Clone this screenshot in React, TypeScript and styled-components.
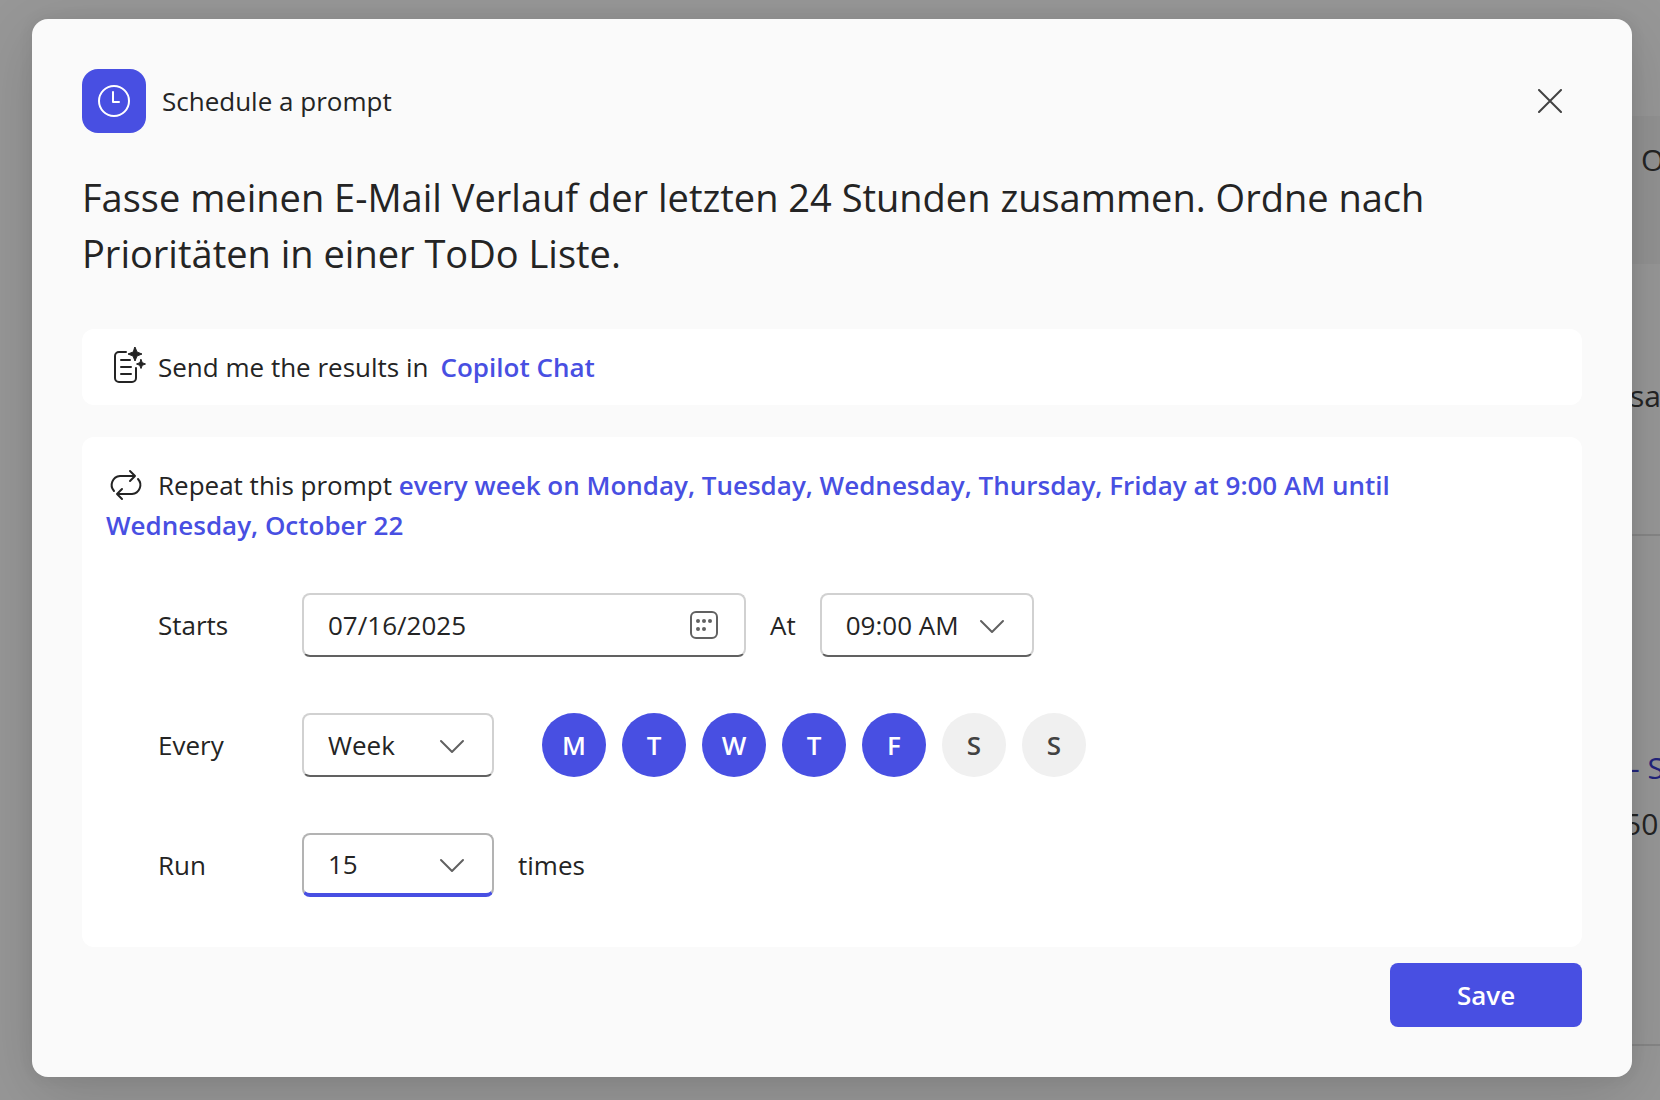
import React, { useState } from "react";
import styled, { createGlobalStyle } from "styled-components";

const font = '"Open Sans", "Noto Sans", sans-serif';
const brand = "#484fe2";
const ink = "#242424";

const GlobalStyle = createGlobalStyle`
  *, *::before, *::after { box-sizing: border-box; }
  body {
    margin: 0;
    background: #979797;
    color: ${ink};
    font-family: ${font};
    font-size: 26px;
    line-height: 40px;
  }
  button, input, select { font: inherit; color: inherit; }
`;

const Stage = styled.div`
  position: relative;
  min-height: 100vh;
  overflow: hidden;
`;

const Underlay = styled.aside`
  position: absolute;
  inset: 0 0 0 auto;
  width: 60px;
  overflow: hidden;
  display: flex;
  flex-direction: column;
  white-space: nowrap;
`;

const UnderlayBlock = styled.div<{ $height: number; $top?: number; $shade?: boolean; $line?: boolean }>`
  flex: none;
  height: ${(p) => p.$height}px;
  padding-top: ${(p) => p.$top || 0}px;
  background: ${(p) => (p.$shade ? "#929292" : "transparent")};
  border-bottom: ${(p) => (p.$line ? "2px solid #868686" : "0")};
  display: flex;
  flex-direction: column;
`;

const UnderlayText = styled.span<{ $indent: number; $link?: boolean }>`
  padding-left: ${(p) => p.$indent}px;
  line-height: 56px;
  font-size: 30px;
  color: ${(p) => (p.$link ? "#22247c" : ink)};
`;

const Layer = styled.div`
  position: relative;
  padding: 19px 28px 23px 32px;
`;

const Dialog = styled.section`
  display: flex;
  flex-direction: column;
  padding: 50px;
  border-radius: 16px;
  background: #fafafa;
  box-shadow: 0 0 16px rgba(0, 0, 0, 0.07), 0 16px 64px rgba(0, 0, 0, 0.14);
`;

const Header = styled.header`
  display: flex;
  align-items: center;
  gap: 16px;
`;

const Tile = styled.span`
  display: grid;
  place-items: center;
  width: 64px;
  height: 64px;
  border-radius: 16px;
  background: ${brand};
  color: #fff;
`;

const CloseButton = styled.button`
  display: grid;
  place-items: center;
  width: 64px;
  height: 64px;
  margin-left: auto;
  padding: 0;
  border: 0;
  background: none;
  color: #424242;
`;

const Prompt = styled.h1`
  margin: 36px 0 48px;
  font-size: 38px;
  line-height: 56px;
  font-weight: 400;
`;

const Cards = styled.div`
  display: flex;
  flex-direction: column;
  gap: 32px;
`;

const Card = styled.div<{ $pad: string }>`
  padding: ${(p) => p.$pad};
  border-radius: 12px;
  background: #fff;
`;

const ResultLine = styled.div`
  display: flex;
  align-items: center;
  gap: 12px;
`;

const TextLink = styled.a`
  color: ${brand};
  font-weight: 600;
  text-decoration: none;
`;

const Summary = styled.p`
  margin: 0 0 48px;
  padding-right: 24px;
  svg { vertical-align: -6px; margin-right: 12px; }
`;

const Form = styled.form`
  display: flex;
  flex-direction: column;
  gap: 56px;
  padding-left: 52px;
`;

const Row = styled.div`
  display: flex;
  align-items: center;
  gap: 24px;
`;

const RowLabel = styled.label`
  width: 120px;
`;

const Field = styled.div<{ $width: number; $active?: boolean }>`
  display: grid;
  align-items: center;
  width: ${(p) => p.$width}px;
  height: 64px;
  border: 2px solid ${(p) => (p.$active ? "#b3b3b3" : "#d1d1d1")};
  border-bottom: ${(p) => (p.$active ? `4px solid ${brand}` : "2px solid #616161")};
  border-radius: 8px;
  background: #fff;
  > * { grid-area: 1 / 1; }
  > svg {
    justify-self: end;
    margin-right: 24px;
    color: #616161;
    pointer-events: none;
  }
`;

const TextInput = styled.input`
  width: 100%;
  height: 40px;
  padding: 0 24px;
  border: 0;
  outline: 0;
  background: none;
`;

const Select = styled.select`
  width: 100%;
  height: 40px;
  padding: 0 24px;
  border: 0;
  outline: 0;
  background: none;
  appearance: none;
`;

const Days = styled.div`
  display: flex;
  gap: 16px;
  margin-left: 24px;
`;

const Day = styled.button<{ $on: boolean }>`
  width: 64px;
  height: 64px;
  padding: 0;
  border: 0;
  border-radius: 50%;
  background: ${(p) => (p.$on ? brand : "#f0f0f0")};
  color: ${(p) => (p.$on ? "#fff" : "#424242")};
  font-weight: 600;
`;

const Footer = styled.footer`
  display: flex;
  justify-content: flex-end;
  padding-top: 16px;
`;

const SaveButton = styled.button`
  width: 192px;
  height: 64px;
  border: 0;
  border-radius: 8px;
  background: ${brand};
  color: #fff;
  font-weight: 600;
`;

const ClockIcon = () => (
  <svg width="32" height="32" viewBox="0 0 32 32" fill="none" stroke="currentColor" strokeWidth="2" aria-hidden="true">
    <circle cx="16" cy="16" r="15" />
    <path d="M15 7v10h6" strokeLinecap="round" strokeLinejoin="round" />
  </svg>
);

const CloseIcon = () => (
  <svg width="24" height="24" viewBox="0 0 24 24" stroke="currentColor" strokeWidth="2" strokeLinecap="round" aria-hidden="true">
    <path d="M1 1l22 22M23 1L1 23" />
  </svg>
);

const NoteIcon = () => (
  <svg width="40" height="40" viewBox="0 0 40 40" fill="none" stroke="currentColor" strokeWidth="2" strokeLinecap="round" aria-hidden="true">
    <path d="M20 5h-7a4 4 0 0 0-4 4v22a4 4 0 0 0 4 4h13a4 4 0 0 0 4-4V21" />
    <path d="M15 13h9M15 20h10M15 27h10" />
    <path
      d="M29 0l2 5 5 2-5 2-2 5-2-5-5-2 5-2zM35 12.500l1.300 3.200 3.200 1.300-3.200 1.300-1.300 3.200-1.300-3.200-3.200-1.300 3.200-1.300z"
      fill="currentColor"
      strokeWidth="1"
      strokeLinejoin="round"
    />
  </svg>
);

const RepeatIcon = () => (
  <svg width="40" height="32" viewBox="0 0 40 32" fill="none" stroke="currentColor" strokeWidth="2" strokeLinecap="round" strokeLinejoin="round" aria-hidden="true">
    <path d="M8 22a9 9 0 0 1 6-15h15M24 2l5 5-5 5" />
    <path d="M32 10a9 9 0 0 1-6 15H11M16 20l-5 5 5 5" />
  </svg>
);

const CalendarIcon = () => (
  <svg width="32" height="32" viewBox="0 0 32 32" fill="none" aria-hidden="true">
    <rect x="3" y="3" width="26" height="26" rx="5" stroke="currentColor" strokeWidth="2" />
    <g fill="currentColor">
      <circle cx="10" cy="12" r="2" />
      <circle cx="16" cy="12" r="2" />
      <circle cx="22" cy="12" r="2" />
      <circle cx="10" cy="20" r="2" />
      <circle cx="16" cy="20" r="2" />
    </g>
  </svg>
);

const ChevronIcon = () => (
  <svg width="32" height="32" viewBox="0 0 32 32" fill="none" stroke="currentColor" strokeWidth="2" strokeLinecap="round" strokeLinejoin="round" aria-hidden="true">
    <path d="M5 12l11 11 11-11" />
  </svg>
);

const week = [
  ["Monday", "M"],
  ["Tuesday", "T"],
  ["Wednesday", "W"],
  ["Thursday", "T"],
  ["Friday", "F"],
  ["Saturday", "S"],
  ["Sunday", "S"],
];

export default function App() {
  const [days, setDays] = useState([true, true, true, true, true, false, false]);
  const toggle = (i: number) => setDays(days.map((on, k) => (k === i ? !on : on)));

  return (
    <Stage>
      <GlobalStyle />
      <Underlay aria-hidden="true">
        <UnderlayBlock $height={116} />
        <UnderlayBlock $height={148} $top={16} $shade>
          <UnderlayText $indent={41}>O</UnderlayText>
        </UnderlayBlock>
        <UnderlayBlock $height={272} $top={104} $line>
          <UnderlayText $indent={30}>sa</UnderlayText>
        </UnderlayBlock>
        <UnderlayBlock $height={510} $top={204} $line>
          <UnderlayText $indent={30} $link>- S</UnderlayText>
          <UnderlayText $indent={24}>50</UnderlayText>
        </UnderlayBlock>
      </Underlay>
      <Layer>
        <Dialog role="dialog" aria-labelledby="dialog-name">
          <Header>
            <Tile><ClockIcon /></Tile>
            <span id="dialog-name">Schedule a prompt</span>
            <CloseButton type="button" aria-label="Close"><CloseIcon /></CloseButton>
          </Header>
          <Prompt>Fasse meinen E-Mail Verlauf der letzten 24 Stunden zusammen. Ordne nach Prioritäten in einer ToDo Liste.</Prompt>
          <Cards>
            <Card $pad="18px 24px">
              <ResultLine>
                <NoteIcon />
                <span>Send me the results in</span>
                <TextLink href="#chat">Copilot Chat</TextLink>
              </ResultLine>
            </Card>
            <Card $pad="28px 24px 50px">
              <Summary>
                <RepeatIcon />
                Repeat this prompt{" "}
                <TextLink href="#schedule-form">
                  every week on Monday, Tuesday, Wednesday, Thursday, Friday at 9:00 AM until Wednesday, October 22
                </TextLink>
              </Summary>
              <Form id="schedule-form" onSubmit={(e) => e.preventDefault()}>
                <Row>
                  <RowLabel htmlFor="start">Starts</RowLabel>
                  <Field $width={444}>
                    <TextInput id="start" defaultValue="07/16/2025" />
                    <CalendarIcon />
                  </Field>
                  <label htmlFor="time">At</label>
                  <Field $width={214}>
                    <Select id="time"><option>09:00 AM</option></Select>
                    <ChevronIcon />
                  </Field>
                </Row>
                <Row>
                  <RowLabel htmlFor="unit">Every</RowLabel>
                  <Field $width={192}>
                    <Select id="unit"><option>Week</option></Select>
                    <ChevronIcon />
                  </Field>
                  <Days>
                    {week.map(([name, letter], i) => (
                      <Day key={name} type="button" aria-label={name} aria-pressed={days[i]} $on={days[i]} onClick={() => toggle(i)}>
                        {letter}
                      </Day>
                    ))}
                  </Days>
                </Row>
                <Row>
                  <RowLabel htmlFor="count">Run</RowLabel>
                  <Field $width={192} $active>
                    <Select id="count"><option>15</option></Select>
                    <ChevronIcon />
                  </Field>
                  <span>times</span>
                </Row>
              </Form>
            </Card>
          </Cards>
          <Footer><SaveButton type="submit" form="schedule-form">Save</SaveButton></Footer>
        </Dialog>
      </Layer>
    </Stage>
  );
}
